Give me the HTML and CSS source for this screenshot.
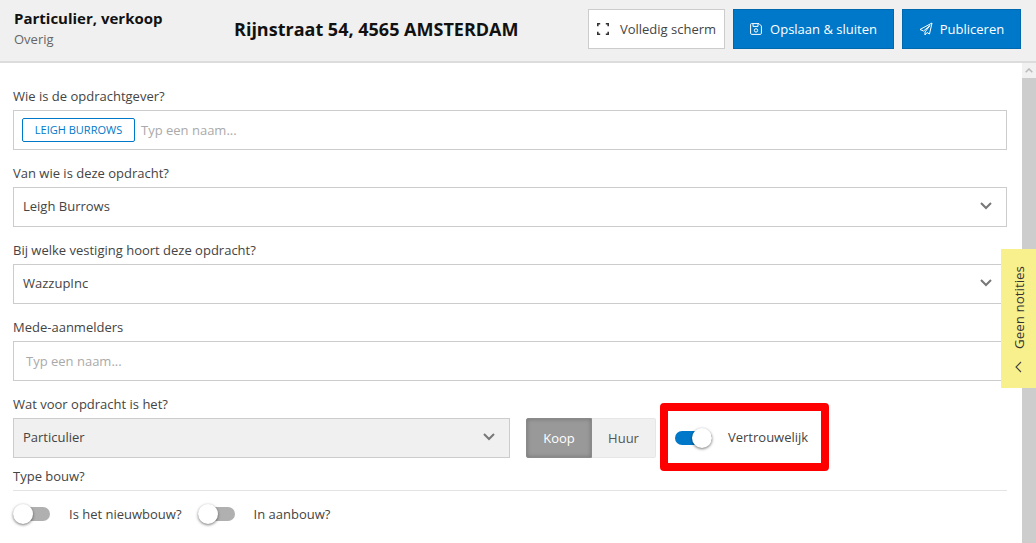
FILE: index.html
```html
<!DOCTYPE html>
<html lang="nl">
<head>
<meta charset="utf-8">
<title>Opdracht</title>
<link rel="stylesheet" href="styles.css">
</head>
<body>
<header class="topbar">
  <div class="kind">
    <div class="kind-title">Particulier, verkoop</div>
    <div class="kind-sub">Overig</div>
  </div>
  <h1 class="address">Rijnstraat 54, 4565 AMSTERDAM</h1>
  <div class="actions">
    <button class="btn btn-light">
      <svg class="icon" viewBox="0 0 12 12" width="12" height="12"><path d="M0.8 3.2V0.8H3.2M8.8 0.8H11.2V3.2M11.2 8.8V11.2H8.8M3.2 11.2H0.8V8.8" fill="none" stroke="#333" stroke-width="1.6"/></svg>
      Volledig scherm
    </button>
    <button class="btn btn-primary btn-save">
      <svg class="icon" viewBox="0 0 12 12" width="12" height="12"><path d="M1.5 0.6H9L11.4 3V10.2A1.2 1.2 0 0 1 10.2 11.4H1.8A1.2 1.2 0 0 1 0.6 10.2V1.5A.9 .9 0 0 1 1.5 .6ZM3 .8V3.4H8V.8" fill="none" stroke="#fff"/><circle cx="6" cy="7.4" r="1.7" fill="none" stroke="#fff"/></svg>
      Opslaan &amp; sluiten
    </button>
    <button class="btn btn-primary btn-publish">
      <svg class="icon" viewBox="0 0 14 14" width="14" height="14"><path d="M13 1L1 7.5L4.5 9L11 3.5L6 10V13L8 10.5L10.5 12Z" fill="none" stroke="#fff" stroke-linejoin="round"/></svg>
      Publiceren
    </button>
  </div>
</header>

<div class="body">
  <main class="form">
    <div class="field">
      <label class="label">Wie is de opdrachtgever?</label>
      <div class="box box-tags">
        <span class="tag">LEIGH BURROWS</span>
        <span class="placeholder">Typ een naam...</span>
      </div>
    </div>
    <div class="field">
      <label class="label">Van wie is deze opdracht?</label>
      <div class="box box-select">
        <span>Leigh Burrows</span>
        <svg class="chev" viewBox="0 0 12 8" width="12" height="8"><path d="M1 1L6 6L11 1" fill="none" stroke="#777" stroke-width="2"/></svg>
      </div>
    </div>
    <div class="field">
      <label class="label">Bij welke vestiging hoort deze opdracht?</label>
      <div class="box box-select">
        <span>WazzupInc</span>
        <svg class="chev" viewBox="0 0 12 8" width="12" height="8"><path d="M1 1L6 6L11 1" fill="none" stroke="#777" stroke-width="2"/></svg>
      </div>
    </div>
    <div class="field">
      <label class="label">Mede-aanmelders</label>
      <div class="box box-input"><span class="placeholder">Typ een naam...</span></div>
    </div>
    <div class="row">
      <div class="field field-kind">
        <label class="label">Wat voor opdracht is het?</label>
        <div class="box box-select box-disabled">
          <span>Particulier</span>
          <svg class="chev" viewBox="0 0 12 8" width="12" height="8"><path d="M1 1L6 6L11 1" fill="none" stroke="#777" stroke-width="2"/></svg>
        </div>
      </div>
      <div class="segment">
        <span class="seg seg-on">Koop</span>
        <span class="seg seg-off">Huur</span>
      </div>
      <div class="switch switch-conf">
        <span class="toggle toggle-on"><span class="knob"></span></span>
        <span class="switch-text">Vertrouwelijk</span>
      </div>
    </div>
    <div class="section-title">Type bouw?</div>
    <div class="switches">
      <div class="switch">
        <span class="toggle"><span class="knob"></span></span>
        <span>Is het nieuwbouw?</span>
      </div>
      <div class="switch">
        <span class="toggle"><span class="knob"></span></span>
        <span>In aanbouw?</span>
      </div>
    </div>
  </main>
  <div class="scrollbar">
    <div class="scroll-up"><svg viewBox="0 0 8 5" width="8" height="5"><path d="M.7 4.3L4 1L7.3 4.3" fill="none" stroke="#bbb" stroke-width="1.6"/></svg></div>
    <div class="scroll-thumb"></div>
  </div>
</div>

<aside class="notes">
  <span class="notes-text">Geen notities</span>
  <svg viewBox="0 0 7 12" width="7" height="12" class="notes-chev"><path d="M6 1L1 6L6 11" fill="none" stroke="#444" stroke-width="1.1"/></svg>
</aside>
<div class="highlight"></div>
</body>
</html>
```
FILE: styles.css
```css
* { box-sizing: border-box; }
html, body { margin: 0; height: 100%; overflow: hidden; }
body {
  font-family: "Open Sans", sans-serif;
  font-size: 13px;
  color: #444;
  background: #fff;
  display: flex;
  flex-direction: column;
  position: relative;
}
.topbar {
  height: 63px;
  flex: none;
  display: flex;
  align-items: center;
  background: #f0f0f0;
  border-bottom: 2px solid #dcdcdc;
  padding: 0 15px 3px 14px;
}
.kind { width: 220px; }
.kind-title { font-size: 15px; font-weight: 700; color: #111; line-height: 20px; margin-top: -2px; }
.kind-sub { font-size: 13px; color: #666; line-height: 20px; margin-top: 1px; }
.address { margin: 0; font-size: 18px; font-weight: 700; color: #111; line-height: 24px; }
.actions { margin-left: auto; display: flex; gap: 8px; }
.btn {
  height: 40px;
  font: 13px "Open Sans", sans-serif;
  display: flex;
  align-items: center;
  justify-content: center;
  gap: 8px;
  padding: 0;
  border-radius: 0;
}
.btn-light { width: 137px; background: #fff; border: 1px solid #ccc; color: #444; gap: 11px; }
.btn-primary { background: #0078c9; border: 1px solid #0068ad; color: #fff; }
.btn-save { width: 161px; }
.btn-publish { width: 119px; gap: 7px; }
.body { flex: 1; display: flex; min-height: 0; }
.form { flex: 1; padding: 23px 15px 0 13px; min-width: 0; }
.field { margin-bottom: 13px; }
.label { display: block; height: 24px; line-height: 20px; }
.box {
  height: 40px;
  border: 1px solid #ccc;
  display: flex;
  align-items: center;
  background: #fff;
  padding-bottom: 1px;
}
.box-tags { padding-left: 8px; gap: 6px; }
.tag {
  width: 113px;
  height: 24px;
  border: 1px solid #0078c9;
  border-radius: 2px;
  color: #0078c9;
  font-size: 11px;
  display: flex;
  align-items: center;
  justify-content: center;
}
.placeholder { color: #aaa; }
.box-input { padding-left: 12px; }
.box-select { justify-content: space-between; padding: 0 14px 2px 9px; }
.box-disabled { background: #f0f0f0; }
.row { display: flex; align-items: flex-start; }
.field-kind { width: 497px; margin-bottom: 0; }
.segment { display: flex; margin: 24px 0 0 16px; height: 40px; }
.seg { display: flex; align-items: center; justify-content: center; }
.seg-on { width: 66px; background: #999; color: #fff; border: 1px solid #8a8a8a; border-radius: 2px 0 0 2px; box-shadow: inset 0 0 4px rgba(0,0,0,.25); }
.seg-off { width: 64px; background: #f0f0f0; color: #555; border: 1px solid #e6e6e6; border-left: 0; border-radius: 0 2px 2px 0; }
.switch { display: flex; align-items: center; }
.switch-conf { margin: 24px 0 0 19px; height: 40px; }
.switch-conf .toggle { margin-right: 16px; }
.switch-text { margin-bottom: 2px; }
.toggle {
  position: relative;
  width: 37px;
  height: 14px;
  border-radius: 7px;
  background: #b0b0b0;
  margin-right: 19px;
  display: block;
  flex: none;
}
.toggle-on { background: #0078c9; }
.knob {
  position: absolute;
  left: 0;
  top: -3px;
  width: 20px;
  height: 20px;
  border-radius: 50%;
  background: #fff;
  box-shadow: 0 1px 3px rgba(0,0,0,.55);
}
.toggle-on .knob { left: 17px; }
.section-title {
  margin-top: 8px;
  height: 25px;
  line-height: 20px;
  border-bottom: 1px solid #e4e4e4;
  padding: 0;
}
.switches { display: flex; gap: 16px; margin-top: 14px; }
.scrollbar { width: 14px; flex: none; display: flex; flex-direction: column; }
.scroll-up { height: 15px; background: #f1f1f1; display: flex; align-items: center; justify-content: center; }
.scroll-thumb { flex: 1; background: #cdcdcd; }
.notes {
  position: absolute;
  right: 0;
  top: 249px;
  width: 35px;
  height: 139px;
  background: #f8ef8d;
  display: flex;
  flex-direction: column;
  align-items: center;
  justify-content: flex-end;
  padding-bottom: 15px;
}
.notes-text { writing-mode: vertical-rl; transform: rotate(180deg); color: #333; line-height: 20px; font-size: 13.4px; }
.notes-chev { margin-top: 12px; }
.highlight {
  position: absolute;
  left: 660px;
  top: 403px;
  width: 169px;
  height: 68px;
  border: 8px solid #f00;
  border-radius: 4px;
}
```
